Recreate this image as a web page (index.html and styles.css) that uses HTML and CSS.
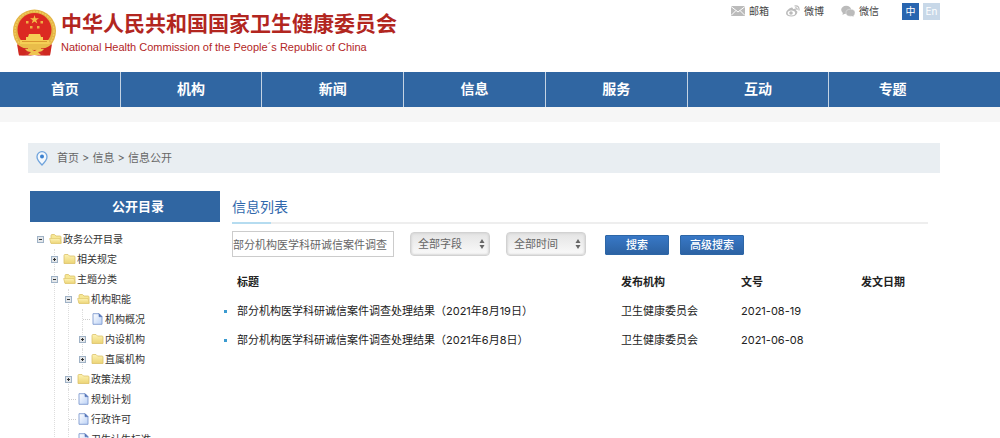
FILE: index.html
```html
<!DOCTYPE html>
<html lang="zh-CN">
<head>
<meta charset="utf-8">
<meta name="viewport" content="width=device-width, initial-scale=1">
<title>信息公开 - 中华人民共和国国家卫生健康委员会</title>
<link rel="stylesheet" href="styles.css">
</head>
<body>
<svg class="sprite" aria-hidden="true">
  <defs>
    <linearGradient id="folder-fill" x1="0" y1="0" x2="0" y2="1"><stop offset="0" stop-color="#fdf3b4"/><stop offset="1" stop-color="#ecd476"/></linearGradient>
    <linearGradient id="page-fill" x1="0" y1="0" x2="1" y2="1"><stop offset="0" stop-color="#fff"/><stop offset="1" stop-color="#bcd2f6"/></linearGradient>
  </defs>
  <symbol id="folder" viewBox="0 0 13 12">
    <path d="M1 10.500V2.500Q1 1.500 2 1.500H5L6.500 3H11Q12 3 12 4V10.500Z" fill="url(#folder-fill)" stroke="#dcc26a" stroke-width=".8"/>
  </symbol>
  <symbol id="folder-open" viewBox="0 0 13 12">
    <path d="M2 10V2.500Q2 1.500 3 1.500H5.500L7 3H11Q12 3 12 4V10Z" fill="#f6e795" stroke="#dcc26a" stroke-width=".8"/>
    <path d="M.6 5.500H11L12.200 10.500H2Z" fill="url(#folder-fill)" stroke="#dfc76e" stroke-width=".7"/>
  </symbol>
  <symbol id="page" viewBox="0 0 13 12">
    <path d="M2 .7H8L11 3.700V11.300H2Z" fill="url(#page-fill)" stroke="#7f9bd0" stroke-width=".9"/>
    <path d="M8 .7V3.700H11Z" fill="#5576b8" stroke="#5576b8" stroke-width=".6"/>
  </symbol>
  <symbol id="arrows" viewBox="0 0 6 10">
    <path d="M3 0L5.500 4H.5ZM3 10L.5 6H5.500Z" fill="#666"/>
  </symbol>
</svg>

<header class="header">
  <a class="brand" href="#">
    <svg class="emblem" viewBox="0 0 45 48" aria-hidden="true">
      <path d="M6 32H39L38 46Q30 47 22.500 46Q15 47 7 46Z" fill="#c9221d"/>
      <circle cx="22.500" cy="22" r="21.500" fill="#e3b344"/>
      <circle cx="22.500" cy="22" r="19.500" fill="none" stroke="#f0cb5c" stroke-width="1.500" stroke-dasharray="2 1"/>
      <circle cx="22.500" cy="21" r="17" fill="#dc2a22"/>
      <path d="M22.500 6L23.500 9.300H27L24.200 11.300L25.300 14.600L22.500 12.600L19.700 14.600L20.800 11.300L18 9.300H21.500Z" fill="#f3bd48"/>
      <path d="M14 12h2.500v2.500H14zM28.500 12H31v2.500h-2.500zM18 17h2.500v2.500H18zM25 17h2.500v2.500H25z" fill="#eeb045"/>
      <path d="M17 25H28L29 28H31V31H37V35H8V31H14V28H16Z" fill="#f5cf55"/>
      <path d="M10 32.500H35" stroke="#d99a31"/>
      <path d="M8 35H37L34 40H11Z" fill="#e9bd4a"/>
      <path d="M5 35Q10 40 16 39L15 46L7 46.500ZM40 35Q35 40 29 39L30 46L38 46.500Z" fill="#cf2820"/>
      <path d="M15 41H30L32 46H13Z" fill="#d0302a"/>
      <path d="M13 40Q18 39 22.500 42Q27 39 32 40Q30 43 26 43L29 46H16L19 43Q15 43 13 40Z" fill="#efc451"/>
    </svg>
    <span class="brand-text">
      <span class="brand-cn">中华人民共和国国家卫生健康委员会</span>
      <span class="brand-en" lang="en">National Health Commission of the People´s Republic of China</span>
    </span>
  </a>
  <div class="tools">
    <a class="tool" href="#">
      <svg class="tool-icon" viewBox="0 0 14 12" aria-hidden="true"><path d="M0 1H14V11H0Z" fill="#bbb"/><path d="M0 1.500L7 7L14 1.500M0 10.500L5 5.500M14 10.500L9 5.500" fill="none" stroke="#fff"/></svg>邮箱</a>
    <a class="tool" href="#">
      <svg class="tool-icon" viewBox="0 0 14 12" aria-hidden="true"><path d="M5.500 2.500Q7 2 7 4Q10.500 3 10 5.500Q12 6.200 11 8.500Q9.500 11.500 5.500 11.500Q0 11.300 0 8Q.5 4.500 5.500 2.500Z" fill="#bbb"/><ellipse cx="5.400" cy="7.900" rx="3.800" ry="2.500" fill="#fff"/><circle cx="5" cy="8" r="1.800" fill="#bbb"/><path d="M8.500 1Q13.500 0 13 5.500M9 3Q11.500 2.500 11 5" fill="none" stroke="#bbb" stroke-width="1.200"/></svg>微博</a>
    <a class="tool" href="#">
      <svg class="tool-icon" viewBox="0 0 14 12" aria-hidden="true"><ellipse cx="5.200" cy="4.800" rx="5" ry="4" fill="#bbb"/><path d="M2 7L1.500 10L5 8Z" fill="#bbb"/><ellipse cx="9.500" cy="7.700" rx="4.500" ry="3.500" fill="#bbb" stroke="#eee" stroke-width=".5"/><path d="M10 10.500L12.500 11.800L12.300 9.500Z" fill="#bbb"/></svg>微信</a>
    <div class="langs">
      <a class="lang lang-current" href="#">中</a>
      <a class="lang" href="#" lang="en">En</a>
    </div>
  </div>
</header>

<nav class="nav" aria-label="主导航">
  <a class="nav-item" href="#">首页</a>
  <a class="nav-item" href="#">机构</a>
  <a class="nav-item" href="#">新闻</a>
  <a class="nav-item" href="#">信息</a>
  <a class="nav-item" href="#">服务</a>
  <a class="nav-item" href="#">互动</a>
  <a class="nav-item" href="#">专题</a>
</nav>
<div class="strip"></div>

<div class="crumbs">
  <svg class="pin" viewBox="0 0 12 15" aria-hidden="true"><path d="M6 14Q1 9 1 5.700A5 5 0 0 1 11 5.700Q11 9 6 14Z" fill="#f3f8fd" stroke="#6fa3dc" stroke-width="1.300"/><circle cx="6" cy="5.600" r="2" fill="#3b80cf"/></svg>
  <span><a href="#">首页</a> &gt; <a href="#">信息</a> &gt; <a href="#">信息公开</a></span>
</div>

<div class="columns">
  <aside class="sidebar">
    <h2 class="side-title">公开目录</h2>
    <ul class="tree">
      <li>
        <div class="row"><button class="toggle" aria-label="收起"></button><svg class="node" aria-hidden="true"><use href="#folder-open"/></svg><a href="#">政务公开目录</a></div>
        <ul class="branch">
          <li><div class="row"><button class="toggle closed" aria-label="展开"></button><svg class="node" aria-hidden="true"><use href="#folder"/></svg><a href="#">相关规定</a></div></li>
          <li>
            <div class="row"><button class="toggle" aria-label="收起"></button><svg class="node" aria-hidden="true"><use href="#folder-open"/></svg><a href="#">主题分类</a></div>
            <ul class="branch">
              <li>
                <div class="row"><button class="toggle" aria-label="收起"></button><svg class="node" aria-hidden="true"><use href="#folder-open"/></svg><a href="#">机构职能</a></div>
                <ul class="branch">
                  <li><div class="row"><span class="joint"></span><svg class="node" aria-hidden="true"><use href="#page"/></svg><a href="#">机构概况</a></div></li>
                  <li><div class="row"><button class="toggle closed" aria-label="展开"></button><svg class="node" aria-hidden="true"><use href="#folder"/></svg><a href="#">内设机构</a></div></li>
                  <li><div class="row"><button class="toggle closed" aria-label="展开"></button><svg class="node" aria-hidden="true"><use href="#folder"/></svg><a href="#">直属机构</a></div></li>
                </ul>
              </li>
              <li><div class="row"><button class="toggle closed" aria-label="展开"></button><svg class="node" aria-hidden="true"><use href="#folder"/></svg><a href="#">政策法规</a></div></li>
              <li><div class="row"><span class="joint"></span><svg class="node" aria-hidden="true"><use href="#page"/></svg><a href="#">规划计划</a></div></li>
              <li><div class="row"><span class="joint"></span><svg class="node" aria-hidden="true"><use href="#page"/></svg><a href="#">行政许可</a></div></li>
              <li><div class="row"><span class="joint"></span><svg class="node" aria-hidden="true"><use href="#page"/></svg><a href="#">卫生计生标准</a></div></li>
            </ul>
          </li>
        </ul>
      </li>
    </ul>
  </aside>

  <main class="main">
    <div class="main-head"><h1 class="main-title">信息列表</h1></div>
    <form class="search">
      <input class="keyword" type="text" aria-label="关键词" value="部分机构医学科研诚信案件调查">
      <span class="picker">
        <select aria-label="字段"><option>全部字段</option></select>
        <svg class="picker-arrows" aria-hidden="true"><use href="#arrows"/></svg>
      </span>
      <span class="picker">
        <select aria-label="时间"><option>全部时间</option></select>
        <svg class="picker-arrows" aria-hidden="true"><use href="#arrows"/></svg>
      </span>
      <div class="actions">
        <button class="btn" type="button">搜索</button>
        <button class="btn" type="button">高级搜索</button>
      </div>
    </form>
    <table class="list">
      <colgroup><col><col class="col-org"><col class="col-no"><col class="col-date"></colgroup>
      <thead><tr><th scope="col">标题</th><th scope="col">发布机构</th><th scope="col">文号</th><th scope="col">发文日期</th></tr></thead>
      <tbody>
        <tr><td><a class="entry" href="#">部分机构医学科研诚信案件调查处理结果（2021年8月19日）</a></td><td>卫生健康委员会</td><td>2021-08-19</td><td></td></tr>
        <tr><td><a class="entry" href="#">部分机构医学科研诚信案件调查处理结果（2021年6月8日）</a></td><td>卫生健康委员会</td><td>2021-06-08</td><td></td></tr>
      </tbody>
    </table>
  </main>
</div>
</body>
</html>
```
FILE: styles.css
```css
* { box-sizing: border-box; }

body {
  margin: 0;
  background: #fff;
  color: #333;
  font: 11px/20px Inter, "Noto Sans CJK SC", sans-serif;
}

a { color: inherit; text-decoration: none; }
ul { list-style: none; margin: 0; padding: 0; }
h1, h2 { margin: 0; }
button, input, select { font: inherit; margin: 0; }

.sprite { position: absolute; width: 0; height: 0; }

/* Header */
.header {
  display: flex;
  justify-content: space-between;
  align-items: flex-start;
  height: 72px;
  padding: 0 60px 0 12px;
}

.brand { display: flex; gap: 4px; padding-top: 9px; color: #b2261f; }
.emblem { width: 45px; height: 48px; }
.brand-text { display: flex; flex-direction: column; }
.brand-cn { font-size: 21px; font-weight: 700; line-height: 30px; }
.brand-en { font: 11px/16px "Liberation Sans", Arial, sans-serif; }

.tools { display: flex; align-items: center; gap: 17px; padding-top: 1px; font-size: 10px; color: #444; }
.tool { display: flex; align-items: center; gap: 4px; }
.tool-icon { width: 14px; height: 12px; }
.langs { display: flex; gap: 4px; padding-left: 6px; }
.lang { width: 17px; height: 17px; background: #c8d8e8; color: #fff; line-height: 17px; text-align: center; }
.lang-current { background: #2865b0; }

/* Navigation */
.nav {
  display: grid;
  grid-template-columns: 111fr 142fr 142fr 142fr 142fr 142fr 127fr;
  padding: 0 44px 0 10px;
  background: #3066a2;
}
.nav-item {
  padding-bottom: 2px;
  border-right: 1px solid #c4d3e3;
  color: #fff;
  font-size: 14px;
  font-weight: 700;
  line-height: 33px;
  text-align: center;
}
.nav-item:last-child { border-right: 0; }
.strip { height: 15px; background: #f6f6f6; }

/* Breadcrumb */
.crumbs {
  display: flex;
  align-items: center;
  gap: 9px;
  margin: 21px 60px 18px 28px;
  padding: 5px 8px;
  background: #e9eef2;
  color: #666;
}
.pin { width: 12px; height: 15px; }

.columns { display: flex; gap: 12px; padding: 0 72px 0 30px; }

/* Directory tree */
.sidebar { flex: 0 0 190px; }
.side-title {
  padding-left: 26px;
  background: #3066a2;
  color: #fff;
  font-size: 13px;
  line-height: 31px;
  text-align: center;
}
.tree { padding: 7px 0 0 3px; font-size: 10px; }
.branch { padding-left: 14px; }
.branch > li { position: relative; }
.branch > li::before {
  content: "";
  position: absolute;
  top: 0;
  bottom: 0;
  left: 7px;
  border-left: 1px dotted #ddd;
}
.row { display: flex; align-items: center; height: 20px; white-space: nowrap; }
.toggle {
  position: relative;
  width: 7px;
  height: 7px;
  margin: 0 5px 0 4px;
  padding: 0;
  border: 1px solid #9fb2c6;
  background: linear-gradient(#333, #333) center / 3px 1px no-repeat #e4e7ea;
}
.toggle.closed {
  background:
    linear-gradient(#333, #333) center / 3px 1px no-repeat,
    linear-gradient(#333, #333) center / 1px 3px no-repeat,
    #e4e7ea;
}
.joint { width: 7px; margin: 0 1px 0 8px; border-top: 1px dotted #ccc; }
.node { width: 13px; height: 12px; margin-right: 1px; }

/* Results */
.main { flex: 1; min-width: 0; }
.main-head { border-bottom: 2px solid #eee; }
.main-title {
  width: 39px;
  margin-bottom: -2px;
  border-bottom: 2px solid #b5dcf0;
  color: #3068ac;
  font-size: 14px;
  font-weight: 400;
  line-height: 31px;
  padding-bottom: 0;
  white-space: nowrap;
}

.search { display: flex; align-items: center; gap: 16px; padding-top: 7px; }
.keyword {
  width: 162px;
  height: 26px;
  padding: 0;
  border: 1px solid #ccc;
  background: #fff;
  color: #666;
}
.picker { position: relative; width: 80px; height: 24px; }
.picker select {
  appearance: none;
  width: 100%;
  height: 100%;
  padding: 0 16px 0 7px;
  border: 1px solid #d2d2d2;
  border-radius: 4px;
  background: linear-gradient(#e4e4e4, #fafafa);
  box-shadow: inset 0 0 2px 1px #d8d8d8;
  color: #666;
}
.picker-arrows { position: absolute; top: 7px; right: 5px; width: 6px; height: 10px; pointer-events: none; }
.actions { display: flex; gap: 11px; padding: 2px 0 0 3px; }
.btn {
  width: 64px;
  height: 20px;
  padding: 0;
  border: 1px solid #2d66a6;
  border-radius: 1px;
  background: linear-gradient(#3878c6, #2c62a3);
  color: #fff;
  font-weight: 500;
  line-height: 18px;
}

.list { width: 100%; margin-top: 10px; border-collapse: collapse; table-layout: fixed; }
.col-org, .col-no { width: 120px; }
.col-date { width: 72px; }
.list th, .list td { height: 29px; padding: 0 0 0 5px; text-align: left; white-space: nowrap; }
.list th { color: #222; font-weight: 700; }
.list td { color: #222; }
.entry { position: relative; }
.entry::before {
  content: "";
  position: absolute;
  top: 6px;
  left: -13px;
  width: 3px;
  height: 3px;
  background: #3b9bd0;
}
```
